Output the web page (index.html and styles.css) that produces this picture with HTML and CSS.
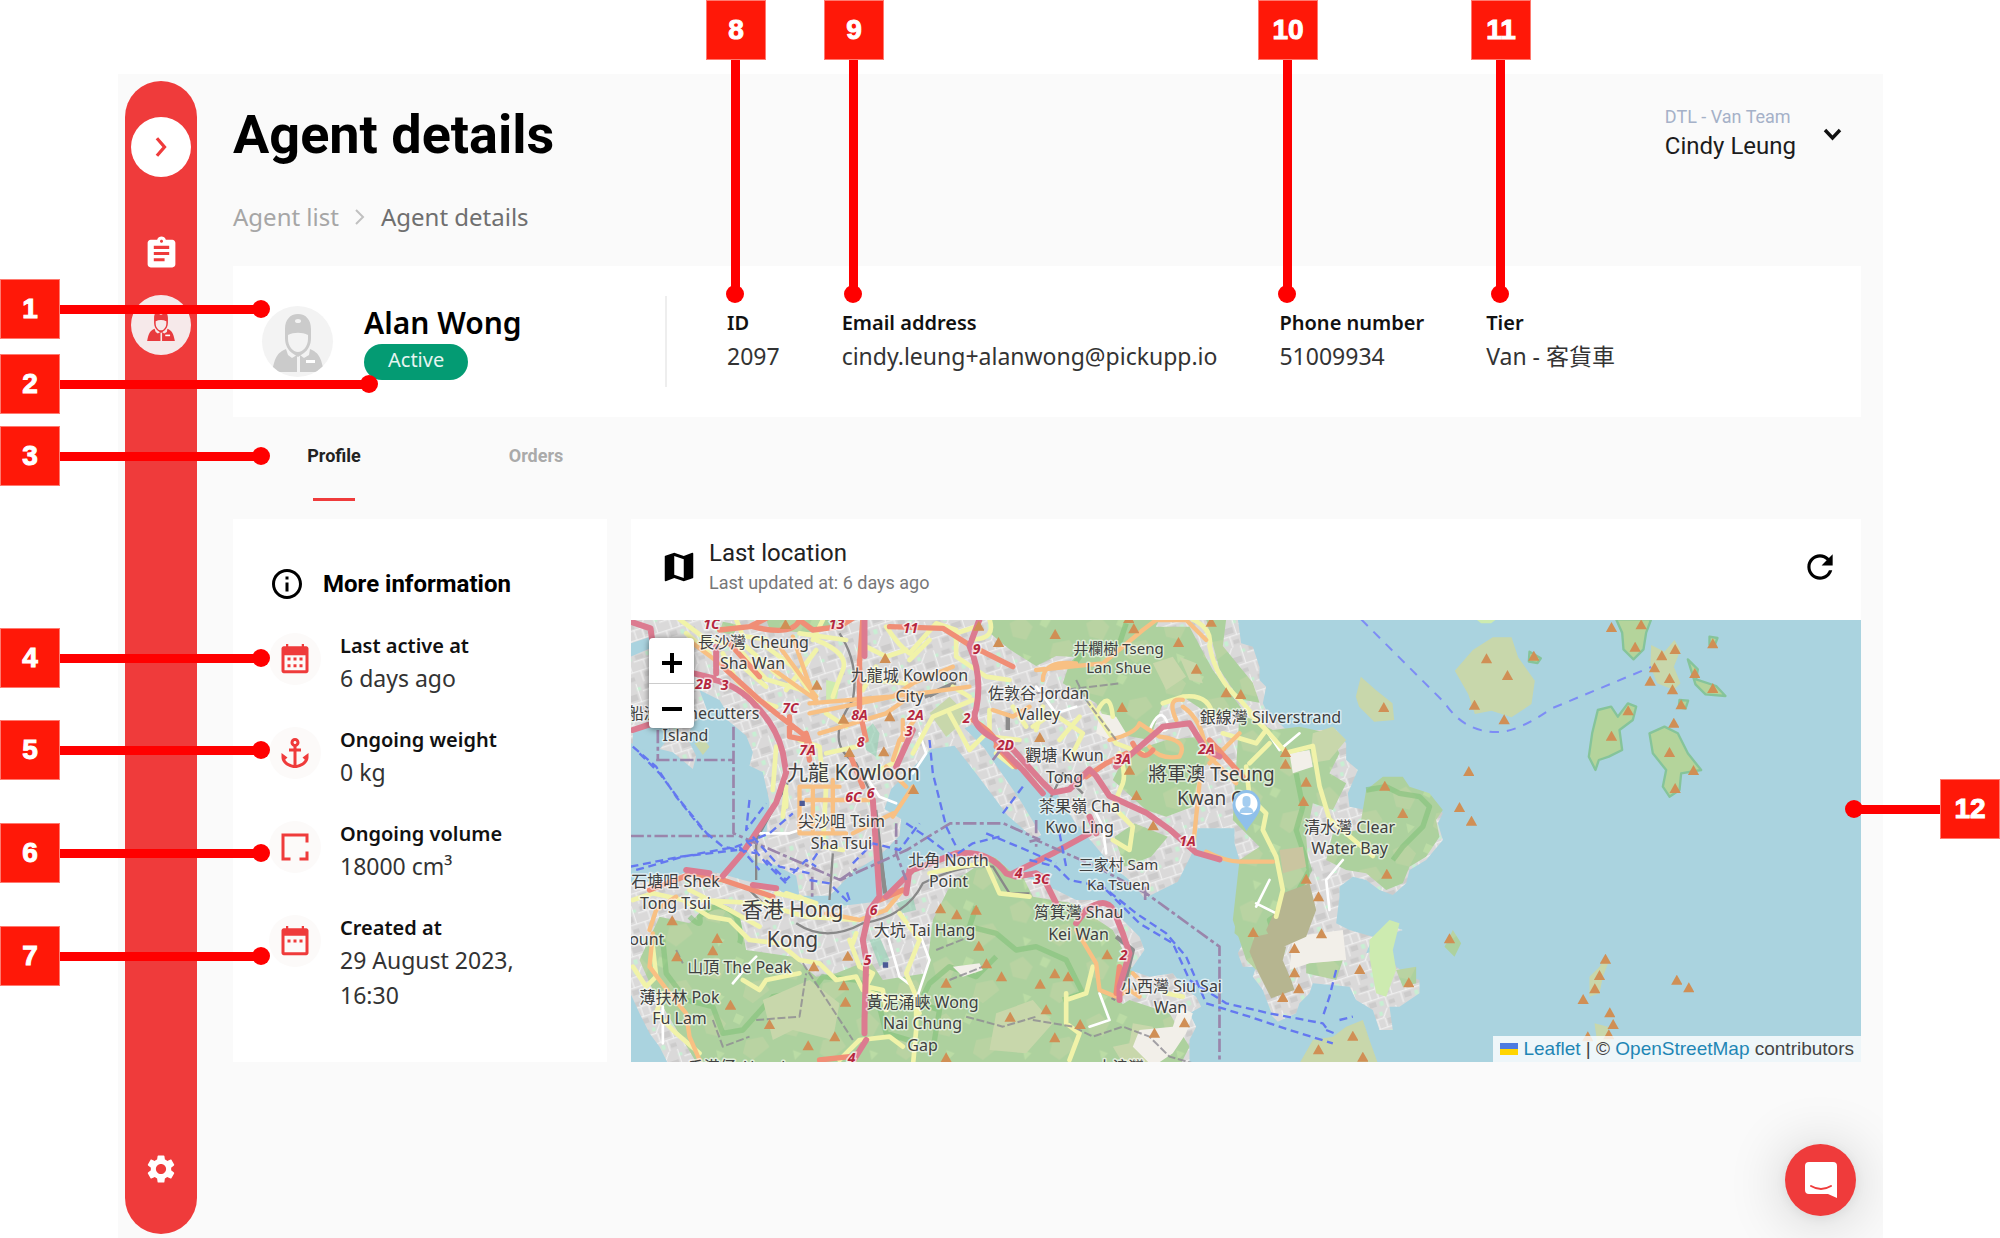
FILE: index.html
```html
<!DOCTYPE html>
<html lang="en">
<head>
<meta charset="utf-8">
<title>Agent details</title>
<meta name="viewport" content="width=device-width, initial-scale=1">
<link rel="stylesheet" href="styles.css">
</head>
<body>
<div class="app">
  <nav class="sidebar" aria-label="Main">
    <button class="nav-button nav-toggle" aria-label="Expand menu">
      <svg width="28" height="28" viewBox="0 0 24 24"><path d="M8.500 4.500 15 12l-6.500 7.500" fill="none" stroke="#ef3b3b" stroke-width="2.800"/></svg>
    </button>
    <a class="nav-button" href="#orders" aria-label="Orders">
      <svg width="37" height="37" viewBox="0 0 24 24"><path fill="#fff" d="M19 3h-4.180C14.400 1.840 13.300 1 12 1c-1.300 0-2.400.840-2.820 2H5c-1.100 0-2 .900-2 2v14c0 1.100.900 2 2 2h14c1.100 0 2-.900 2-2V5c0-1.100-.900-2-2-2zm-7 0c.550 0 1 .450 1 1s-.450 1-1 1-1-.450-1-1 .450-1 1-1zm2 14H7v-2h7v2zm3-4H7v-2h10v2zm0-4H7V7h10v2z"/></svg>
    </a>
    <a class="nav-button nav-current" href="#agents" aria-label="Agents">
      <svg width="32" height="32" viewBox="0 0 60 60"><use href="#agent"/></svg>
    </a>
    <a class="nav-button nav-settings" href="#settings" aria-label="Settings">
      <svg width="34" height="34" viewBox="0 0 24 24"><path fill="#fff" d="M19.140 12.940c.040-.300.060-.610.060-.940 0-.320-.020-.640-.070-.940l2.030-1.580c.180-.140.230-.410.120-.610l-1.920-3.320c-.120-.220-.370-.290-.590-.220l-2.390.960c-.500-.380-1.030-.700-1.620-.940l-.360-2.540c-.040-.240-.240-.410-.480-.410h-3.840c-.240 0-.430.170-.470.410l-.360 2.540c-.590.240-1.130.570-1.620.940l-2.390-.960c-.220-.080-.470 0-.590.220L2.740 8.870c-.120.210-.080.470.120.610l2.030 1.580c-.050.300-.090.630-.090.940s.020.640.070.940l-2.030 1.580c-.180.140-.230.410-.120.610l1.920 3.320c.120.220.370.290.590.220l2.390-.960c.500.380 1.030.700 1.620.940l.360 2.540c.050.240.240.410.480.410h3.840c.240 0 .440-.170.470-.410l.360-2.540c.590-.240 1.130-.560 1.620-.940l2.390.960c.220.080.470 0 .590-.220l1.920-3.320c.120-.220.070-.470-.120-.610l-2.010-1.580zM12 15.600c-1.980 0-3.600-1.620-3.600-3.600s1.620-3.600 3.600-3.600 3.600 1.620 3.600 3.600-1.620 3.600-3.600 3.600z"/></svg>
    </a>
  </nav>

  <main class="main">
    <header class="header">
      <h1>Agent details</h1>
      <button class="user">
        <span class="user-text"><span class="user-team">DTL - Van Team</span><span class="user-name">Cindy Leung</span></span>
        <svg width="24" height="24" viewBox="0 0 24 24"><path d="m5 10 7.500 8L20 10" fill="none" stroke="#111" stroke-width="3.400"/></svg>
      </button>
    </header>

    <nav class="breadcrumb" aria-label="Breadcrumb">
      <a href="#agents">Agent list</a>
      <svg width="12" height="18" viewBox="0 0 12 18"><path d="m2 2 7 7-7 7" fill="none" stroke="#c0c0c0" stroke-width="2"/></svg>
      <span>Agent details</span>
    </nav>

    <section class="card summary">
      <div class="agent">
        <div class="avatar">
          <svg width="60" height="60" viewBox="0 0 60 60"><g id="agent" fill="currentColor">
            <path fill-rule="evenodd" d="M17 26V17C17 8 22 2 30 2s13 6 13 15v9c0 7-3 12-7 15l-6 4-6-4c-4-3-7-8-7-15zm3-3v4c0 7 5 13 10 13s10-6 10-13v-4c-6-3-14-3-20 0zM27 9a3 2 0 0 0 6 0 3 2 0 0 0-6 0z"/>
            <path d="M18 37c-9 4-11 8-14 23h25V43l-5 3-4-3zm24 0c9 4 11 8 14 23H32V43l4 3 5-3z"/><path fill="#fff" d="M38 48h9v3h-9z"/></g></svg>
        </div>
        <div class="agent-name"><h2>Alan Wong</h2><span class="badge">Active</span></div>
      </div>
      <dl class="facts">
        <div><dt>ID</dt><dd>2097</dd></div>
        <div><dt>Email address</dt><dd>cindy.leung+alanwong@pickupp.io</dd></div>
        <div><dt>Phone number</dt><dd>51009934</dd></div>
        <div><dt>Tier</dt><dd>Van - 客貨車</dd></div>
      </dl>
    </section>

    <div class="tabs" role="tablist">
      <button class="tab tab-active" role="tab" aria-selected="true">Profile</button>
      <button class="tab" role="tab" aria-selected="false">Orders</button>
    </div>

    <div class="panels">
      <section class="card info">
        <h3><svg width="36" height="36" viewBox="0 0 24 24"><path d="M11 7h2v2h-2zm0 4h2v6h-2zm1-9C6.480 2 2 6.480 2 12s4.480 10 10 10 10-4.480 10-10S17.520 2 12 2zm0 18c-4.410 0-8-3.590-8-8s3.590-8 8-8 8 3.590 8 8-3.590 8-8 8z"/></svg>More information</h3>
        <ul>
          <li><span class="dot"><svg width="36" height="36" viewBox="0 0 24 24"><path fill-rule="evenodd" d="M18 3.500h1.500C20.300 3.500 21 4.200 21 5v15c0 .8-.7 1.500-1.500 1.500h-15C3.700 21.500 3 20.800 3 20V5c0-.8.7-1.500 1.500-1.500H6V2h1.500v1.500h9V2H18zM5 9.500V19.500h14V9.500zM7 11h2v2H7zm4 0h2v2h-2zm4 0h2v2h-2zm-8 4.500h2v2H7zm4 0h2v2h-2zm4 0h2v2h-2z"/></svg></span>
            <div><strong>Last active at</strong><span>6 days ago</span></div></li>
          <li><span class="dot"><svg width="36" height="36" viewBox="0 0 24 24"><path d="m17 15 1.550 1.550c-.960 1.690-3.330 3.040-5.550 3.370V11h3V9h-3V7.820C14.160 7.400 15 6.300 15 5c0-1.650-1.350-3-3-3S9 3.350 9 5c0 1.300.840 2.400 2 2.820V9H8v2h3v8.920c-2.220-.330-4.590-1.680-5.550-3.370L7 15l-4-3v3c0 3.880 4.920 7 9 7s9-3.120 9-7v-3l-4 3zM12 4c.550 0 1 .450 1 1s-.450 1-1 1-1-.450-1-1 .450-1 1-1z"/></svg></span>
            <div><strong>Ongoing weight</strong><span>0 kg</span></div></li>
          <li><span class="dot"><svg width="36" height="36" viewBox="0 0 24 24"><path d="M3 3h18v6h-2V5H5v14h4v2H3zM21 15v6h-6v-2h4v-4z"/></svg></span>
            <div><strong>Ongoing volume</strong><span>18000 cm³</span></div></li>
          <li><span class="dot"><svg width="36" height="36" viewBox="0 0 24 24"><path fill-rule="evenodd" d="M18 3.500h1.500C20.300 3.500 21 4.200 21 5v15c0 .8-.7 1.500-1.500 1.500h-15C3.700 21.500 3 20.800 3 20V5c0-.8.7-1.500 1.500-1.500H6V2h1.500v1.500h9V2H18zM5 8.500V19.500h14V8.500zM7 11h2v2H7zm4 0h2v2h-2zm4 0h2v2h-2z"/></svg></span>
            <div><strong>Created at</strong><span>29 August 2023, 16:30</span></div></li>
        </ul>
      </section>

      <section class="card location">
        <header class="location-head">
          <svg width="38" height="38" viewBox="0 0 24 24"><path d="m20.500 3-.160.030L15 5.100 9 3 3.360 4.900c-.210.070-.360.250-.360.480V20.500c0 .280.220.500.500.500l.160-.030L9 18.900l6 2.100 5.640-1.900c.210-.070.360-.250.360-.480V3.500c0-.280-.220-.500-.500-.500zM15 19l-6-2.110V5l6 2.110V19z"/></svg>
          <div class="location-title"><h3>Last location</h3><p>Last updated at: 6 days ago</p></div>
          <button class="refresh" aria-label="Refresh"><svg width="38" height="38" viewBox="0 0 24 24"><path d="M17.650 6.350C16.200 4.900 14.210 4 12 4c-4.420 0-7.990 3.580-7.990 8s3.570 8 7.990 8c3.730 0 6.840-2.550 7.730-6h-2.080c-.820 2.330-3.040 4-5.650 4-3.310 0-6-2.690-6-6s2.690-6 6-6c1.660 0 3.140.690 4.220 1.780L13 11h7V4l-2.350 2.350z"/></svg></button>
        </header>
        <div class="map">
          <svg class="map-canvas" viewBox="0 0 1231 442" preserveAspectRatio="xMidYMid slice" role="img" aria-label="Map of Hong Kong">
            <defs>
              <marker id="peak" markerUnits="userSpaceOnUse" markerWidth="34" markerHeight="31" refX="17" refY="16"><path d="M17 0l17 30H0z" fill="#d08f55"/></marker>
              <pattern id="blocks" width="110" height="90" patternUnits="userSpaceOnUse" patternTransform="rotate(-18)">
                <path fill="#dad9d9" d="M0 0h110v90H0z"/>
                <path fill="#cccbcb" d="M8 8h26v14H8zM60 30h30v18H60zM20 62h22v16H20zM80 70h18v12H80z"/>
                <path fill="#c8efd3" d="M42 6h10v12H42zM94 12h12v10H94zM52 66h12v14H52z"/>
                <path fill="none" stroke="#f4f4f4" stroke-width="3" d="M0 26h50l20-26M54 26v30H0M54 56h56M30 26v30M74 56v34M96 0v56M12 56v34"/>
              </pattern>
              <pattern id="hills" width="230" height="170" patternUnits="userSpaceOnUse">
                <path fill="#add19e" d="M0 0h230v170H0z"/>
                <path fill="#b9d3a2" d="M20 30l40-20 30 30-20 40-40-10zM150 90l50-10 20 30-50 40-30-20z"/>
                <path fill="#bbdca5" d="M120 10l24 10-14 24-20-10zM60 120l26 10-20 20z"/>
              </pattern>
              <clipPath id="island"><path d="M33 1150l97-10 90-30 80 10 70 20 100 25 70 40 80 15 70-5 80-10 60-25 20-40 50-35 90-40 90-10 50 20 50 45 60 20 20 10 50 20 60 30h60l40 20 40 40 50 50 15 40-35 50-10 10 60 20 70-10 40 50 30 20 15 30-35 20 20 40-20 40v80H150l-30-60-30-40-30-60-27-60z"/></clipPath>
            </defs>
            <path fill="#aad3df" d="M-600 0h2600v442H-600z"/>
            <g transform="translate(-11 -120) scale(.33333)">
              <g class="land">
                <path d="M33 358H1855l10 72 35 10 20 60v40l20 20-10 50 10 20 20 20 40 40 40 20 40-20h70l30 40v50l35 30-30 70 5 40 50 10 30-10-30-30 60-40h60l10 30 60 20 40 40-15 30 15 50-50 60-50 30-10 40-40 35-40-15-40-30-40-10-40 30v30l-10 80 40 20 70 20-20 50 40-10 15-50 25-20 30 10-30 10-10 60 20 40 40 30 30 10v40l-60 40h-30l10 70h-40l-20-60-50-30-20-40-110-10-10 30-30 30-10 30-55 25-15-15-30-80-30-40 10-30h-40l-15-40 25-50v-20l30-60 20-60h-50l10-80-30-10-15-50v-45H1735l-20 80-40 80-100 50-40-50-60-50-50-60-60-70-50-80-70-30-50-60-80-100-60-20-20 10 60 60 110 160 60 100-20 12-80-70-90-120-70-90-70 10-60 60-60 60-20 60 50 30-5 50-60 60-80 50-70 70h-90l-10-60-60-30-60-10-40-50 70-30 10-100-20-90-40-20 10-40-20-50-60-50-70-30-30 50-20 30 30 60-10 40-60-50-80-20-60-10z"/>
                <path d="M33 1150l97-10 90-30 80 10 70 20 100 25 70 40 80 15 70-5 80-10 60-25 20-40 50-35 90-40 90-10 50 20 50 45 60 20 20 10 50 20 60 30h60l40 20 40 40 50 50 15 40-35 50-10 10 60 20 70-10 40 50 30 20 15 30-35 20 20 40-20 40v80H150l-30-60-30-40-30-60-27-60z"/>
              </g>
              <path fill="#aad3df" d="M33 430l60-20 10 30-70 30zM240 570l60 30 30 50-60 60-60-40 60-20zM120 640l40 60-50 60-70-20V700z"/>
              <path fill="#c8d7ab" d="M225 730l30-10 15 20-20 25zM930 640l60-50 60 60-70 60z"/>

              <g class="green">
                <path d="M1110 358h510l-20 40-100 80-190-10-60 30-80-50-60-50z"/>
                <path d="M1450 380h260l70 130 90 120-90 20-90-60-60 20-40 110-110-20-50-90-100-60 20-60z"/>
                <path d="M440 358h220l-20 30-90 10-100-10zM310 365l50 10-20 30-40-10zM1760 358h60l-10 80 90 110 20 60-60-10-60-90z"/>
                <path d="M1480 840l40-80 120-40 100-10 80 40-80 60-20 110-80 30-60-20z"/>
                <path d="M1860 640l100 50 80-10 90 20 30 60-30 60 50 30-40 80-60-20-20 100 10 120-110 220-50 60-30-30-40-120 20-180 60-40-80-80z"/>
                <path d="M2240 870l50-40h60l20 30 60 20 40 50-20 30 10 50-40 60-50 30-20 50-50 20-60-50-60-10-60-30 20-80 80-10z"/>
                <path d="M1850 1240l50-30 20 60-10 60-40-10-25-20z"/>
                <path d="M2060 1390l110-10-20 60-90-20zM2330 1410l60-10v50l-40 10zM2500 1290l25 40-20 40-30-30z"/>
                <path d="M1485 1010l60-40 100 40-50 60-80 30z"/>
              </g>
              <g clip-path="url(#island)" class="green">
                <path d="M60 1380l60-130 90 20 60-60 90 30 20 110 140 20 70 60 60-10 100-40 40 60 130-20 20-160 60-120 40-20 90-60 70 50 40 80 120 20 120 80 60 120-40 90 60 80 40 140H250l-60-100-90-150z"/>
                <path d="M1450 1550l80-50 120 40 60 100-30 60h-270z"/>
              </g>
              <g class="ridge">
                <path d="M210 1250q40 40 30 0 60-60 110 0 20 60 10 80M130 1320l10 100 60 80 80 20 30 80 60-10 90-100 120-20 30-40 100 10 60 40 30 120 100 30M1070 1220l-20 60 80 20 60 50 60-10 90 40 50 100-60 20M1130 1370l-60 60-80-30-60 50-30 60 60 20-20 120M1360 500l40-60 100-10 20-60M2030 820l20 100-20 70 40 120-60 110-60 40 20 60M2240 870l60-10 40 20 60 10 30 30-20 60-60 60-30 40"/>
              </g>
              <g fill="#c8d7ab">
                <path d="M1600 490l60-20 40 60-60 40zM1680 470l50 20 20 60-40-10zM430 1500l140-60 90 70-20 110-120-30-60 30zM1130 1540l110-40 60 70-80 90-110-10zM2080 700l60-20 40 40-50 60-60 10zM2560 450l60-38h56l20 60 50 70-10 70-60 40-60-20-50 10-20-60-40-70z"/>
                <path d="M1480 1640l50-10 10-60 60 10 20 110h-110z"/>
                <path d="M2224 530l45 40 50 40 5 50-60 5-45-45-10-30zM2040 1690l40-70 60-10 40-30 50-20 20 60 25 70z"/>
              </g>
              <g fill="#f2efe9">
                <path d="M1440 640l50 10 30 50-30 30-60-30zM1560 1590l100-10 20-60 40 20-20 60-40 60-60 40-60-60zM2010 760l60-10 10 50-60 20zM1000 1400l80-10 10 20-60 20zM2020 1310l150-20 10 90-110 10-60 20z"/>
              </g>
              <g fill="#b6b590"><path d="M1990 1180l80-30 20 80-30 80-90 40-30-60zM1905 1310l50-10 60 140 10 30-70 25-40-80-25-60zM1960 1330l40 10-10 40-25 10z"/><path fill="#cac5a0" d="M1980 1050l70-10 10 60-70 20z"/></g>
              <path fill="#cdebb0" d="M2250 1320l60-60 30 10-20 80 10 60-30 80-30-10-20-110zM2570 358h60l-15 12h-30zM620 540l40 10-10 60-30-10z"/>
              <path fill="#8fd0b0" opacity=".6" d="M750 1320l30-10 30 70-30 20zM830 1210l50-20 10 40-40 10zM730 700l30-30 20 30-10 70-30-20z"/>
              <g class="isle">
                <path d="M2990 358h105l-15 40-8 50-30 30-30-30-4-50z"/>
                <path d="M2935 630l40-10 20 30 30-40 25 10-10 40-40 30 8 60-40 20-30 10-10 30-20-40 10-70z"/>
                <path d="M3090 700l45-20 40 20 30 60 40 50-60 10-5 50-30 20-20-30 10-50-40-50z"/>
                <path d="M3205 478l30 30-5 30 60 20 28 30-60-5-30-30z"/>
                <path d="M3270 410l24 4-10 26-14-6zM3180 600l26 2-8 24-20-4zM2730 455l34 20-10 14-26-4z"/>
              </g>
              <path fill="#c8d7ab" d="M3095 435l40 20 30-35 18 30-20 50 20 50-20 20-50-20-20-50zM2910 1430l30-30 20-30 10 10-20 50-10 50-30 10zM2925 1570l40 10 10 60h-40z"/>

              <g class="rail"><path d="M660 400q60 90 40 200-90 130 10 190l40 80M410 1140V1020l100-180M640 1060l-10 140M380 1160l60 60M530 1270q90 60 200 0 130-20 180-120 120-60 210-50l50 80h60M770 930l30 260M1290 900l40-80 60 60M930 590l80-40"/></g>
              <path class="pier" d="M765 960l32 220M915 590l90-40M1490 1310l50 40-20 80-40 70M1165 640v50"/>

              <g id="minor" class="r-minor"><path d="M420 1000h90l60-20M880 820l40-60-20-60M740 830l40 60 50 20M1250 560l60 80 60-20M1420 920l30 60 10 80M1910 1220l40-80M1910 1210l60 30M1940 690l40 60 60-50M1590 690q30-70 50-30t-30 30M800 1290l40 140 40 30M900 1300l30 80-40 120M340 1450l50-60 20-20M130 1520v110M1440 1480l30 80-60 20M2130 1230l-10-90 50-60"/></g>
              <g id="yellow" class="r-yellow">
                <path d="M180 358l80 60 90 20 90 100 100 30 50 20M540 400l140 20M590 420q100 40 80 90t-30 80M310 460l40 80 60 60 60 20M440 440l80 60 60 90M500 570l90-120M370 500l70 60M800 380q40 60 70 80l80-90 60 20v80l90 60 70 10M870 480l60-60M1110 358q20 60-50 60M770 500l-40 70M1060 600l-120 50-60 110M540 720l60 20 10 100M470 740l-10 130M990 640l60 110 50-50"/>
                <path d="M350 358l20 50 70 10M200 400l70 60M380 440l100 90M610 360l-30 60M740 440l60 30 60-20M760 540l100 10M620 640l60 40M620 760l90-20M500 860l-10 90M760 820l60-30 20-60M1010 400l60-20M560 1200l-90-20M420 1170l70 60M600 1230l-60-40M1130 760l50 40M1180 620l40 60M1270 620l-20 70M1000 560l50 30"/>
                <path d="M620 860l-10 180 60 10M500 880v40M1110 630v80l90 10M1240 680l60-40 90 60-40 80M1410 610l80 120 80 30M1320 720l60-70M1720 358q60 30 50 80 20 100 90 160l140 160 80-20 20 120 30 100 130 110M1430 640q40-80 50 10M1630 610l60-20q80-10 90 60M1810 700l100 30 30-40-60-60M1890 790l60-60M1500 760q20 60 10 90l-30 70 60 60-10 70-50-30M1880 800l10 90 50 50-10 50 40 80 20 100-20 80"/>
                <path d="M40 1200l60-20 90 20 80 50 60 10 60 60 90 10 60 50 60 10 50 50 60-10 20 40 60 20 90 10 20 40M210 1170l120 60 90 50M240 1200l180 10 140 40 150 10M500 1180l90 30M690 1320l30 80 40 20-20 40 50 10 10 60M840 1240l60 80-40 100 30 70v100l-10 110M930 1120l90-20 80-10 40 90 90 10M700 1330l10-30M370 1440l50 30 20-30 100-20M40 1400l40 60 30-30-10-90M130 1480l-20 60 60 60 70 60M660 1680l60-60 90-10 40 30M1420 1400l-20 80-60 20M1340 1480v90l40 30-30 80M1640 1480l50 10"/>
              </g>
              <g id="orange" class="r-orange">
                <path d="M480 440l110 150M450 500l140 100M220 430l80 60M570 610l240-20 90-10 150-20M570 640l250-50 60-40 120-50M600 700l200-60 70-50M520 410q30 90 70 200M1250 510l200-20 120-100 40-30h90l60 60M1270 540q0-60 100-50M1470 720q80-20 90-50l60 40q90 10 60 60-60 10-90-30M1670 660q-30-70 20-60M1690 620q60 40 70 140l90 90M1740 850l-20 200M1860 700l-90 90M1760 1055q60 30 100 30h100"/>
                <path d="M540 860h120M540 860v140h140M580 860v130M640 840v150M560 900h190M820 950l60-90M800 800l60 60M900 640l-60 80-20 60M850 660v60M700 1000l120-60M1120 630l60 20 50-30M90 1290l20-60 60-40M100 1300l-10 100 60 80 50 60 10 70 30 70M620 1240l100 20 80-30 50-60M1370 1290l60 100 10 80 50 20 40-20 30 20M1540 1420l20 20"/>
              </g>
              <g id="trunk" class="r-trunk">
                <path d="M300 390l90-10 60-30M400 380q120 30 140-20l40 30 80-10 40-25M720 480v150l20 90M730 358l-10 130M810 380l160 5 80 50M1060 440l120 60M310 500l110 100 50 40 90 70M510 650v60l50 10 10 60M560 700l20 60M330 430l90 100M1060 660q80 50 70 80l60 60M1540 730q30 60 60 20M1770 720l100 110M1400 830l60-40 60-30M90 1170l130-50 90 20 150 50M780 1200l70-30M600 1680l90-10M1490 1480l10-80M690 760l40 100"/>
              </g>
              <g id="motor" class="r-motor">
                <path d="M33 365l60 20 10 70 60 50 120 30M280 538q80 20 130 80 60 60 80 140l10 60-30 90-100 150-60 70M290 520V440M40 690l60-20 60-30M110 430l30 60M735 358v110M1080 358l-30 80q40 90 20 190-20 40 40 80l70 40 90 100 30 30 50-10 60-60 20 20 40 60 110 50 70 50 80 70 70 20M1490 800l60-50 80-70 80-10 50 80 40 20M830 800l50-110M760 900l20 290-30 40-20 90 10 60-5 180v40M800 1190l80-80 130-50q100-10 150 60l30 10 60-10 30 20M1180 1120l120-60 110-60M860 1180l10-70M1270 1130l40 80M1370 1270l30-40q70-50 90 20l20 50 20 60-30 100M200 1110l70 10M400 1155l70 10M1150 750l60 60 60 70M690 1700l50-80M1430 1000l-20-50M1500 1500v-40"/>
              </g>

              <g class="border">
                <path d="M110 780h230M115 690v90M342 680v320l320 140 200-90 130-80h160l110 50M33 1008h310M830 970v90l30 80M578 1130v60M1230 1025l20-5 180 80 150 80 220 160v350M1250 960v80M1577 1160v50M1120 780l30-40M660 1140l60-40"/>
              </g>
              <g class="trail"><path d="M410 1560l130-10 20-130M550 1390l150 230M170 1350l20 40M280 1560l30 80 80-30M950 1350l100-40M990 1440l100-40M1250 580l250-30M1370 540l30 60 90 120M1240 1560l120 20 60 30 90-30 80 30 60 60 70 20 5 60M1040 1550l110 30 100-30"/></g>
              <g class="ferry">
                <path d="M40 740l70 60 60 90 80 100 60 50 100 20M60 760l60 60 60 80 90 110M50 1110l140-40 160-30 100-40 70-60M33 1100l150-30 170-20M360 1040l60 70M380 1020l60 70 60 60M400 1010l80 90 90 20M390 900l-10 90 60-80M440 1080l60 60 60-60 30 20M580 1080l40-60M700 1090l60-60 80 20 60-80M930 720l10 100 40 160 30 60M860 970l60 40 80 60 60-40 80-20M1100 1000l120 50 90 40M1210 860l-60 80M690 1200l-10-30M570 1140l60 10 60 60"/>
                <path d="M1230 1080l80 20 40 40 100 20 100 80 90 60 60 70 60 140 130 40 120 40 130 40M1460 1170l100 100 100 60 50 110 110 70 130 30 160 30 15 20M2120 1590l25 10M2150 1410l-20 80-20 60M1320 1000l20 100M2160 1560l40-10"/>
              </g>
              <g class="ferry-far"><path d="M2225 358l250 250q60 90 160 88 60 0 160-70l300-125"/></g>

              <polyline class="peaks" points="498,373 797,475 592,555 672,657 811,650 690,757 793,755 1078,378 1137,427 882,868"/>
              <polyline class="peaks" transform="translate(1230 300)" points="77,103 298,55 313,86 545,66 447,127 501,207 590,278 634,283 278,322 31,412 300,510 321,586 371,677 768,457 768,492 830,546 822,604 1066,558 1120,640 1063,322"/>
              <polyline class="peaks" transform="translate(0 840)" points="158,422 293,475 280,512 172,530 685,528 583,560 673,617 678,666 333,675 450,733 646,770 566,797 963,386 1012,404 1070,390 1078,498 1101,551 1146,590 980,609 1172,711 980,833"/>
              <polyline class="peaks" transform="translate(1230 960)" points="830,177 867,230 671,337 876,341 795,385 795,458 808,506 760,532 991,448 1138,488 1072,162 233,404 76,461 116,470 32,492 50,569 152,613 76,653 465,608 375,639 970,648 867,689 1000,711"/>
              <polyline class="peaks" points="2601,476 2664,526 2743,468 2565,615 2654,659 2976,382 3065,374 3047,441 3167,448 3127,467 3105,503 3092,543 3150,535 3159,569 3280,431 3226,520 3280,565 3185,614 3026,632 2976,708 3163,669 3150,757 3222,811 3167,865 2548,814 2520,922 2556,963 2490,1316 2958,1377 2940,1426 2926,1466 2891,1498 3172,1440 3208,1463 2971,1538 2981,1573 2968,1604 2905,1610"/>
              <path fill="#4c5a96" d="M540 902h16v16h-16zM790 1387h16v16h-16z"/>
            </g>
            <g class="route">
              <text x="81" y="9">1C</text><text x="206" y="9">13</text><text x="280" y="13">11</text><text x="346" y="34">9</text><text x="73" y="69">2B</text><text x="94" y="70">3</text><text x="160" y="93">7C</text><text x="229" y="100">8A</text><text x="285" y="100">2A</text><text x="278" y="116">3</text><text x="336" y="103">2</text><text x="375" y="130">2D</text><text x="230" y="127">8</text><text x="177" y="135">7A</text><text x="223" y="182">6C</text><text x="240" y="178">6</text><text x="388" y="258">4</text><text x="411" y="264">3C</text><text x="243" y="295">6</text><text x="237" y="345">5</text><text x="221" y="443">4</text><text x="576" y="134">2A</text><text x="492" y="144">3A</text><text x="557" y="226">1A</text><text x="493" y="340">2</text>
            </g>
            <g class="place">
              <text x="123" y="28">長沙灣 Cheung</text><text x="122" y="49">Sha Wan</text>
              <text x="279" y="61">九龍城 Kowloon</text><text x="279" y="82">City</text>
              <text x="55" y="99">昂船洲 Stonecutters</text><text x="55" y="121">Island</text>
              <text x="408" y="79">佐敦谷 Jordan</text><text x="408" y="100">Valley</text>
              <text x="640" y="103">銀線灣 Silverstrand</text>
              <text x="434" y="141">觀塘 Kwun</text><text x="434" y="163">Tong</text>
              <text x="449" y="192">茶果嶺 Cha</text><text x="449" y="213">Kwo Ling</text>
              <text x="719" y="213">清水灣 Clear</text><text x="719" y="234">Water Bay</text>
              <text x="448" y="298">筲箕灣 Shau</text><text x="448" y="320">Kei Wan</text>
              <text x="541" y="372">小西灣 Siu Sai</text><text x="540" y="393">Wan</text>
              <text x="211" y="207">尖沙咀 Tsim</text><text x="211" y="229">Sha Tsui</text>
              <text x="318" y="246">北角 North</text><text x="318" y="267">Point</text>
              <text x="45" y="267">石塘咀 Shek</text><text x="45" y="289">Tong Tsui</text>
              <text x="294" y="316">大坑 Tai Hang</text><text x="9" y="325">Mount</text>
              <text x="109" y="353">山頂 The Peak</text>
              <text x="49" y="383">薄扶林 Pok</text><text x="49" y="404">Fu Lam</text>
              <text x="292" y="388">黃泥涌峽 Wong</text><text x="292" y="409">Nai Chung</text><text x="292" y="431">Gap</text>
              <text x="120" y="453">香港仔 Aberdeen</text><text x="490" y="453">大浪灣</text>
            </g>
            <g class="place place-small">
              <text x="488" y="34">井欄樹 Tseng</text><text x="488" y="53">Lan Shue</text>
              <text x="488" y="250">三家村 Sam</text><text x="488" y="270">Ka Tsuen</text>
            </g>
            <g class="place place-town"><text x="581" y="161">將軍澳 Tseung</text><text x="581" y="185">Kwan O</text></g>
            <g class="place place-city">
              <text x="223" y="160">九龍 Kowloon</text><text x="162" y="297">香港 Hong</text><text x="162" y="327">Kong</text>
            </g>
            <g class="pin"><path fill="#8fc0ea" d="M616 211c-4-8-14-16-14-26a14 15 0 0 1 28 0c0 10-10 18-14 26z"/><circle cx="616" cy="184" r="11" fill="#fff"/><path fill="#a4cdf0" d="M612 180a4 4 0 0 1 8 0v3a4 4 0 0 1-8 0zM609 193c0-4 3-6 7-6s7 2 7 6z"/></g>
          </svg>
          <div class="zoom"><button aria-label="Zoom in"><svg width="20" height="20" viewBox="0 0 20 20"><path d="M0 10h20M10 0v20"/></svg></button><button aria-label="Zoom out"><svg width="20" height="20" viewBox="0 0 20 20"><path d="M0 10h20"/></svg></button></div>
          <div class="attribution"><a href="#leaflet"><svg width="18" height="12" viewBox="0 0 18 12"><path fill="#4c7be1" d="M0 0h18v6H0z"/><path fill="#ffd500" d="M0 6h18v6H0z"/></svg> Leaflet</a> | © <a href="#osm">OpenStreetMap</a> contributors</div>
        </div>
      </section>
    </div>
  </main>
  <button class="chat" aria-label="Open chat"><svg width="34" height="38" viewBox="0 0 34 38"><path fill="#fff" d="M5 1h24a4 4 0 0 1 4 4v32l-9-4H5a4 4 0 0 1-4-4V5a4 4 0 0 1 4-4z"/><path d="M7 25q10 6 20 0" fill="none" stroke="#ef3b3b" stroke-width="2" stroke-linecap="round"/></svg></button>
</div>

<div class="callouts">
  <div class="callout side" style="top:279px;width:270px"><b>1</b></div>
  <div class="callout side" style="top:354px;width:378px"><b>2</b></div>
  <div class="callout side" style="top:426px;width:270px"><b>3</b></div>
  <div class="callout side" style="top:628px;width:270px"><b>4</b></div>
  <div class="callout side" style="top:720px;width:270px"><b>5</b></div>
  <div class="callout side" style="top:823px;width:270px"><b>6</b></div>
  <div class="callout side" style="top:926px;width:270px"><b>7</b></div>
  <div class="callout side from-right" style="top:779px;width:155px"><b>12</b></div>
  <div class="callout down" style="left:706px"><b>8</b></div>
  <div class="callout down" style="left:824px"><b>9</b></div>
  <div class="callout down" style="left:1258px"><b>10</b></div>
  <div class="callout down" style="left:1471px"><b>11</b></div>
</div>
</body>
</html>
```

FILE: styles.css
```css
* { box-sizing: border-box; }
body { margin: 0; padding: 74px 117px 0 118px; background: #fff; color: #222; font-family: "Noto Sans", "Noto Sans CJK TC", sans-serif; position: relative; min-height: 100vh; }
h1, h2, h3, p, dl, dd, ul { margin: 0; padding: 0; }
ul { list-style: none; }
button { border: 0; background: none; padding: 0; font: inherit; color: inherit; cursor: pointer; }
a { text-decoration: none; color: inherit; }
svg { display: block; flex: none; }

.app { display: flex; gap: 36px; min-height: calc(100vh - 74px); padding: 7px 22px 4px 7px; background: #fafafa; position: relative; overflow: hidden; }

/* Sidebar */
.sidebar { flex: none; width: 72px; padding: 36px 0 35px; border-radius: 36px; background: #ef3b3b; display: flex; flex-direction: column; align-items: center; }
.nav-button { width: 60px; height: 60px; border-radius: 50%; display: grid; place-items: center; }
.nav-toggle { background: #fff; margin-bottom: 46px; }
.nav-current { background: #f6e9ea; margin-top: 12px; color: #e83a3e; }
.nav-settings { margin-top: auto; }

/* Header */
.main { flex: 1; min-width: 0; padding-top: 22px; }
.header { display: flex; justify-content: space-between; align-items: flex-start; padding-right: 17px; font-family: Roboto, sans-serif; }
h1 { font-size: 54px; line-height: 64px; font-weight: 700; color: #000; }
.user { display: flex; align-items: center; gap: 24px; text-align: left; }
.user-text { display: flex; flex-direction: column; }
.user-team { font-size: 18px; line-height: 28px; color: #a5b1c8; }
.user-name { font-size: 24px; line-height: 30px; color: #1c1c1c; }
.breadcrumb { display: flex; align-items: center; gap: 15px; margin: 34px 0 33px; font-size: 24px; line-height: 32px; color: #6f6f6f; }
.breadcrumb a { color: #a6a6a6; }

.card { background: #fff; }
/* Agent summary */
.summary { display: flex; height: 151px; align-items: center; padding: 0 29px; }
.agent { display: flex; gap: 31px; width: 405px; height: 91px; align-items: center; border-right: 2px solid #eee; flex: none; }
.avatar { width: 71px; height: 71px; border-radius: 50%; background: #f3f3f3; color: #cbcbcb; display: grid; place-items: center; overflow: hidden; }
.agent-name { display: flex; flex-direction: column; align-items: flex-start; gap: 2px; }
h2 { font-size: 30px; line-height: 38px; font-weight: 600; color: #000; }
.badge { height: 36px; padding: 0 24px; border-radius: 18px; background: #049b73; color: #e6f5f1; font-size: 20px; line-height: 32px; }
.facts { display: flex; gap: 62px; padding: 0 0 4px 60px; }
dt { font-size: 20px; line-height: 32px; font-weight: 600; color: #111; }
dd { font-size: 23px; line-height: 34px; color: #333; }

/* Tabs */
.tabs { display: flex; height: 102px; }
.tab { width: 202px; height: 84px; position: relative; font: 700 18px/78px Roboto, sans-serif; color: #aaa; padding-bottom: 6px; }
.tab-active { color: #222; }
.tab-active::after { content: ""; position: absolute; left: 80px; right: 80px; bottom: 0; height: 3px; background: #ef3b3b; }

/* Panels */
.panels { display: grid; grid-template-columns: 374px minmax(0, 1fr); gap: 24px; }
.info { padding: 45px 36px 36px; }
.info h3 { display: flex; align-items: center; gap: 18px; font: 700 24px/40px Roboto, sans-serif; color: #000; padding-bottom: 27px; }
.info li { display: flex; gap: 19px; min-height: 94px; }
.dot { flex: none; width: 52px; height: 52px; margin-top: 2px; border-radius: 50%; background: #fcfaf9; display: grid; place-items: center; fill: #ef3b3b; }
.info strong { display: block; font-size: 20px; line-height: 30px; font-weight: 600; color: #111; }
.info li div span { display: block; font-size: 23px; line-height: 35px; color: #333; }

/* Map card */
.location { display: flex; flex-direction: column; }
.location-head { display: flex; align-items: center; height: 101px; padding: 0 22px 5px 29px; gap: 11px; font-family: Roboto, sans-serif; }
.location-title { flex: 1; }
.location-title h3 { font-size: 24px; line-height: 32px; font-weight: 400; color: #222; }
.location-title p { font-size: 18px; line-height: 28px; color: #777; }
.map { position: relative; flex: 1; min-height: 442px; background: #aad3df; overflow: hidden; }
.map-canvas { position: absolute; inset: 0; width: 100%; height: 100%; }
.land { fill: url(#blocks); }
.green { fill: url(#hills); }
.ridge { fill: none; stroke: #82c17a; stroke-width: 16; opacity: .6; stroke-linejoin: round; }
.isle { fill: #b4d49b; stroke: #85c49a; stroke-width: 7; stroke-linejoin: round; }
.rail, .pier, .border, .trail, .ferry, .ferry-far { fill: none; stroke-linejoin: round; }
.rail { stroke: #888; stroke-width: 7; }
.pier { stroke: #8c8c8c; stroke-width: 13; }
.border { stroke: #9a85ab; stroke-width: 8; stroke-dasharray: 40 10 12 10; }
.trail { stroke: #8d8b92; stroke-width: 6; stroke-dasharray: 24 8; opacity: .8; }
.ferry { stroke: #6478f0; stroke-width: 7; stroke-dasharray: 24 14; }
.ferry-far { stroke: #7d8cf5; stroke-width: 6; stroke-dasharray: 28 24; }
.r-minor, .r-yellow, .r-orange, .r-trunk, .r-motor { fill: none; stroke-linejoin: round; stroke-linecap: round; }
.r-minor { stroke: #fff; stroke-width: 8; }
.r-yellow { stroke: #f1f3a9; stroke-width: 14; }
.r-orange { stroke: #f8c083; stroke-width: 13; }
.r-trunk { stroke: #f08e76; stroke-width: 16; }
.r-motor { stroke: #dc7b90; stroke-width: 18; }
.peaks { fill: none; marker: url(#peak); }
.place { font-family: "Noto Sans", "Noto Sans CJK TC", sans-serif; font-size: 16px; text-anchor: middle; fill: #404040; stroke: #fff; stroke-opacity: .6; stroke-width: 3px; paint-order: stroke; stroke-linejoin: round; }
.place-small { font-size: 15px; }
.place-town { font-size: 19px; }
.place-city { font-size: 21px; }
.route { font: italic 700 14px "Noto Sans", sans-serif; text-anchor: middle; fill: #b5273f; stroke: #fff; stroke-opacity: .7; stroke-width: 3px; paint-order: stroke; }
.zoom { position: absolute; left: 18px; top: 18px; width: 45px; background: #fff; border-radius: 4px; box-shadow: 0 1px 6px #0008; }
.zoom button { width: 45px; height: 45px; padding-top: 5px; display: grid; place-items: center; stroke: #000; stroke-width: 4; }
.zoom button + button { border-top: 1px solid #ccc; }
.attribution { position: absolute; right: 0; bottom: 0; padding: 0 7px; background: #fffc; font: 19px/26px "Liberation Sans", sans-serif; color: #444; }
.attribution a { color: #1f86b5; }
.attribution svg { display: inline-block; }

.chat { position: absolute; right: 27px; bottom: 22px; width: 71px; height: 72px; border-radius: 50%; background: #ef3b3b; display: grid; place-items: center; box-shadow: 0 2px 12px #0000000f, 0 4px 60px #0003; }

/* Numbered callouts over the screen */
.callouts { position: absolute; inset: 0; pointer-events: none; overflow: hidden; }
.callout { position: absolute; }
.callout b { position: absolute; width: 60px; height: 60px; border: 1px solid #ff7a70; background: #ff1808; color: #fff; font: 700 28px/58px "Liberation Sans", sans-serif; text-align: center; -webkit-text-stroke: 1px #fff; }
.callout::before, .callout::after { content: ""; position: absolute; background: #f00; }
.callout::after { width: 18px; height: 18px; border-radius: 50%; }
.side { left: 0; height: 60px; }
.side::before { left: 0; right: 8px; top: 26px; height: 9px; }
.side::after { right: 0; top: 21px; }
.side b { left: 0; z-index: 1; }
.from-right { left: auto; right: 0; }
.from-right::before { left: 8px; right: 0; }
.from-right::after { left: 0; right: auto; }
.from-right b { left: auto; right: 0; }
.down { top: 0; width: 60px; height: 303px; }
.down::before { left: 25px; top: 0; bottom: 8px; width: 9px; }
.down::after { left: 20px; bottom: 0; }
.down b { top: 0; left: 0; z-index: 1; }
```
